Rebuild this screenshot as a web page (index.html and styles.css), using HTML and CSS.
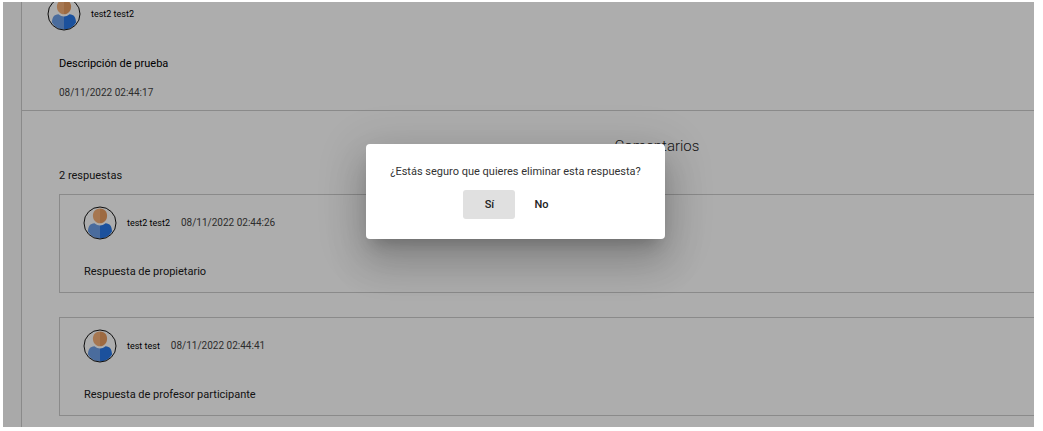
FILE: index.html
```html
<!DOCTYPE html>
<html lang="es">
<head>
<meta charset="utf-8">
<meta name="viewport" content="width=device-width, initial-scale=1">
<title>Comentarios</title>
<link rel="stylesheet" href="styles.css">
</head>
<body>
<svg class="defs" aria-hidden="true">
  <symbol id="avatar" viewBox="0 0 34 34">
    <circle cx="17" cy="17" r="16" fill="#fff"/>
    <path d="M5 25.500C5 20.500 7 17.300 11.500 17.200C13.500 18.900 15 19.400 17 19.400V32.500C12 32.500 7.500 30 5 25.500Z" fill="#6ea0e8"/>
    <path d="M29 25.500C29 20.500 27 17.300 22.500 17.200C20.500 18.900 19 19.400 17 19.400V32.500C22 32.500 26.500 30 29 25.500Z" fill="#2878e8"/>
    <path d="M17 2.500C12.800 2.500 9.900 5.600 9.900 9.700C9.900 13.900 13 17.300 17 17.300Z" fill="#f5b078"/>
    <path d="M17 2.500C21.200 2.500 24.100 5.600 24.100 9.700C24.100 13.900 21 17.300 17 17.300Z" fill="#e89c60"/>
    <circle cx="17" cy="17" r="16" fill="none" stroke="#141414" stroke-width="1"/>
  </symbol>
</svg>
<div class="frame">
  <main class="thread">
    <article class="post">
      <header class="author author-post">
        <svg class="avatar"><use href="#avatar"/></svg>
        <span class="name">test2 test2</span>
      </header>
      <p class="description">Descripción de prueba</p>
      <time class="date">08/11/2022 02:44:17</time>
    </article>
    <section class="comments">
      <h2 class="title">Comentarios</h2>
      <p class="count">2 respuestas</p>
      <article class="reply">
        <header class="author">
          <svg class="avatar"><use href="#avatar"/></svg>
          <span class="name">test2 test2</span>
          <time class="date">08/11/2022 02:44:26</time>
        </header>
        <p class="text">Respuesta de propietario</p>
      </article>
      <article class="reply">
        <header class="author">
          <svg class="avatar"><use href="#avatar"/></svg>
          <span class="name">test test</span>
          <time class="date">08/11/2022 02:44:41</time>
        </header>
        <p class="text">Respuesta de profesor participante</p>
      </article>
    </section>
  </main>
  <div class="overlay">
    <div class="dialog" role="dialog" aria-modal="true" aria-labelledby="question">
      <p class="question" id="question">¿Estás seguro que quieres eliminar esta respuesta?</p>
      <div class="actions">
        <button class="button button-active" type="button">Sí</button>
        <button class="button" type="button">No</button>
      </div>
    </div>
  </div>
</div>
</body>
</html>
```
FILE: styles.css
```css
* {
  box-sizing: border-box;
}

body {
  margin: 0;
  padding: 2px 9px 4px 3px;
  height: 100vh;
  background: #fff;
  color: #202020;
  font: 11px/16px Roboto, sans-serif;
}

p,
h2 {
  margin: 0;
}

.defs {
  position: absolute;
  width: 0;
  height: 0;
}

.frame {
  position: relative;
  height: 100%;
  padding-left: 18px;
  overflow: hidden;
  background: #fafafa;
}

.thread {
  min-height: 100%;
  margin-right: -258px;
  border-left: 1px solid #ccc;
  background: #fff;
}

.post {
  padding: 0 37px 9px;
  border-bottom: 1px solid #ccc;
}

.author {
  display: flex;
  align-items: center;
}

.author-post {
  margin: -5px 0 25px -12px;
}

.avatar {
  width: 34px;
  height: 34px;
  margin-right: 10px;
}

.name {
  margin-right: 11px;
  font-size: 9px;
  color: #000;
}

.description {
  margin-bottom: 13px;
  color: #000;
}

.date {
  display: block;
  font-size: 10px;
  color: #444;
}

.comments {
  padding: 25px 37px;
}

.title {
  margin-bottom: 12px;
  font-size: 15px;
  font-weight: 300;
  line-height: 20px;
  text-align: center;
  color: #222;
}

.count {
  margin-bottom: 10px;
}

.reply {
  margin-bottom: 24px;
  padding: 11px 24px 12px;
  border: 1px solid #ccc;
}

.reply .author {
  margin: 0 0 24px -1px;
}

.overlay {
  position: absolute;
  inset: 0;
  display: flex;
  justify-content: center;
  align-items: flex-start;
  padding: 142px 6px 0 0;
  background: rgba(0, 0, 0, 0.32);
}

.dialog {
  padding: 20px 24px;
  border-radius: 4px;
  background: #fff;
  box-shadow: 0 11px 15px -7px rgba(0, 0, 0, 0.2), 0 24px 38px 3px rgba(0, 0, 0, 0.14), 0 9px 46px 8px rgba(0, 0, 0, 0.12);
}

.question {
  margin-bottom: 10px;
  color: #333;
}

.actions {
  display: flex;
  justify-content: center;
}

.button {
  min-width: 52px;
  padding: 6px 12px;
  border: 0;
  border-radius: 3px;
  background: transparent;
  color: #222;
  font: 500 11px/17px Roboto, sans-serif;
}

.button-active {
  background: #e0e0e0;
}
```
